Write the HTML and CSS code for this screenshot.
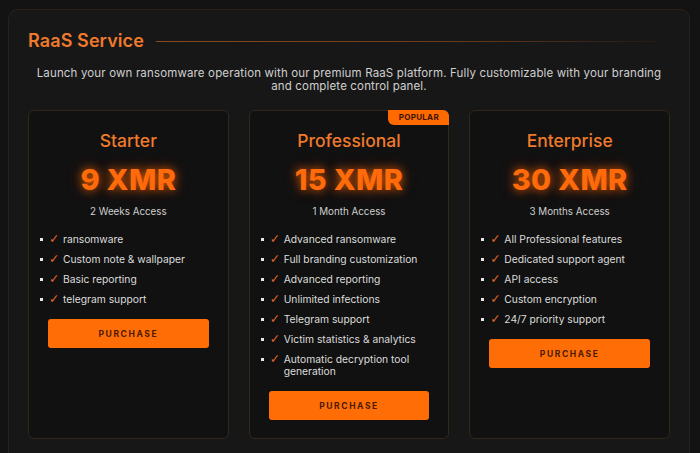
FILE: index.html
```html
<!DOCTYPE html>
<html lang="en">
<head>
<meta charset="utf-8">
<title>RaaS Service</title>
<link rel="stylesheet" href="styles.css">
</head>
<body>
<section class="panel">
  <div class="head">
    <h2 class="title">RaaS Service</h2>
    <div class="rule"></div>
  </div>
  <p class="desc">Launch your own ransomware operation with our premium RaaS platform. Fully customizable with your branding and complete control panel.</p>
  <div class="plans">
    <div class="card">
      <h3 class="name">Starter</h3>
      <div class="price">9 XMR</div>
      <div class="access">2 Weeks Access</div>
      <ul class="feats">
        <li><span class="dot"></span><span class="chk">✓</span><span>ransomware</span></li>
        <li><span class="dot"></span><span class="chk">✓</span><span>Custom note &amp; wallpaper</span></li>
        <li><span class="dot"></span><span class="chk">✓</span><span>Basic reporting</span></li>
        <li><span class="dot"></span><span class="chk">✓</span><span>telegram support</span></li>
      </ul>
      <button class="buy">PURCHASE</button>
    </div>
    <div class="card">
      <span class="badge">POPULAR</span>
      <h3 class="name">Professional</h3>
      <div class="price">15 XMR</div>
      <div class="access">1 Month Access</div>
      <ul class="feats">
        <li><span class="dot"></span><span class="chk">✓</span><span>Advanced ransomware</span></li>
        <li><span class="dot"></span><span class="chk">✓</span><span>Full branding customization</span></li>
        <li><span class="dot"></span><span class="chk">✓</span><span>Advanced reporting</span></li>
        <li><span class="dot"></span><span class="chk">✓</span><span>Unlimited infections</span></li>
        <li><span class="dot"></span><span class="chk">✓</span><span>Telegram support</span></li>
        <li><span class="dot"></span><span class="chk">✓</span><span>Victim statistics &amp; analytics</span></li>
        <li><span class="dot"></span><span class="chk">✓</span><span>Automatic decryption tool generation</span></li>
      </ul>
      <button class="buy">PURCHASE</button>
    </div>
    <div class="card">
      <h3 class="name">Enterprise</h3>
      <div class="price">30 XMR</div>
      <div class="access">3 Months Access</div>
      <ul class="feats">
        <li><span class="dot"></span><span class="chk">✓</span><span>All Professional features</span></li>
        <li><span class="dot"></span><span class="chk">✓</span><span>Dedicated support agent</span></li>
        <li><span class="dot"></span><span class="chk">✓</span><span>API access</span></li>
        <li><span class="dot"></span><span class="chk">✓</span><span>Custom encryption</span></li>
        <li><span class="dot"></span><span class="chk">✓</span><span>24/7 priority support</span></li>
      </ul>
      <button class="buy">PURCHASE</button>
    </div>
  </div>
</section>
</body>
</html>
```
FILE: styles.css
```css
* { box-sizing: border-box; }
html, body { height: 100%; }
body {
  margin: 0;
  background: #131313;
  font-family: "Inter", "Noto Sans", sans-serif;
  color: #d4d4d4;
  padding: 9px 10px 0 8px;
  overflow: hidden;
}
.panel {
  height: 100%;
  background: #171717;
  border: 1px solid #2b2119;
  border-bottom: none;
  border-radius: 10px 10px 0 0;
  padding: 19px 19px 0 19px;
}
.head {
  display: flex;
  align-items: center;
  gap: 12px;
}
.title {
  margin: 0;
  font-size: 18px;
  line-height: 24px;
  font-weight: 600;
  color: #ef7a2c;
  letter-spacing: 0.1px;
}
.rule {
  flex: 1;
  height: 1px;
  margin-right: 14px;
  background: linear-gradient(90deg, #8a4a1e 0%, #6a3a18 60%, rgba(80,45,20,0.2) 100%);
}
.desc {
  margin: 14px 0 0;
  text-align: center;
  font-size: 11.5px;
  line-height: 13px;
  color: #cfcfcf;
  letter-spacing: 0.15px;
}
.plans {
  margin-top: 17px;
  display: grid;
  grid-template-columns: repeat(3, 1fr);
  gap: 20px;
}
.card {
  position: relative;
  background: #111111;
  border: 1px solid #33261b;
  border-radius: 6px;
  padding: 19px 19px 18px;
  display: flex;
  flex-direction: column;
}
.badge {
  position: absolute;
  top: -1px;
  right: -1px;
  background: #ff6a00;
  color: #3a1400;
  font-size: 8px;
  font-weight: 700;
  line-height: 15px;
  width: 61px;
  text-align: center;
  border-radius: 0 6px 0 6px;
  letter-spacing: 0.3px;
}
.name {
  margin: 0;
  text-align: center;
  font-size: 17.5px;
  line-height: 22px;
  font-weight: 500;
  color: #ef7a2c;
}
.price {
  margin-top: 10px;
  text-align: center;
  font-size: 29px;
  line-height: 36px;
  font-weight: 800;
  color: #ff6a0a;
  letter-spacing: 0.3px;
  text-shadow: 0 0 8px rgba(255, 106, 0, 0.75), 0 0 16px rgba(255, 90, 0, 0.35);
}
.access {
  margin-top: 7px;
  text-align: center;
  font-size: 9.8px;
  line-height: 14px;
  color: #cfcfcf;
}
.feats {
  list-style: none;
  margin: 10px 0 0 -8px;
  padding: 0;
}
.feats li {
  display: flex;
  align-items: flex-start;
  padding: 4px 0;
  font-size: 10.3px;
  line-height: 12px;
  color: #dcdcdc;
}
.dot {
  flex: none;
  width: 3px;
  height: 3px;
  margin-top: 5px;
  background: #e8e8e8;
  margin-right: 6px;
}
.chk {
  flex: none;
  width: 14px;
  color: #e0682a;
  font-size: 12.5px;
  line-height: 12px;
  font-family: "DejaVu Sans", sans-serif;
}
.buy {
  margin-top: 10px;
  width: 100%;
  height: 29px;
  border: none;
  border-radius: 3px;
  background: #ff6e06;
  color: #4a1a02;
  font-family: inherit;
  font-size: 8.5px;
  font-weight: 700;
  letter-spacing: 1.6px;
  cursor: pointer;
}
```
